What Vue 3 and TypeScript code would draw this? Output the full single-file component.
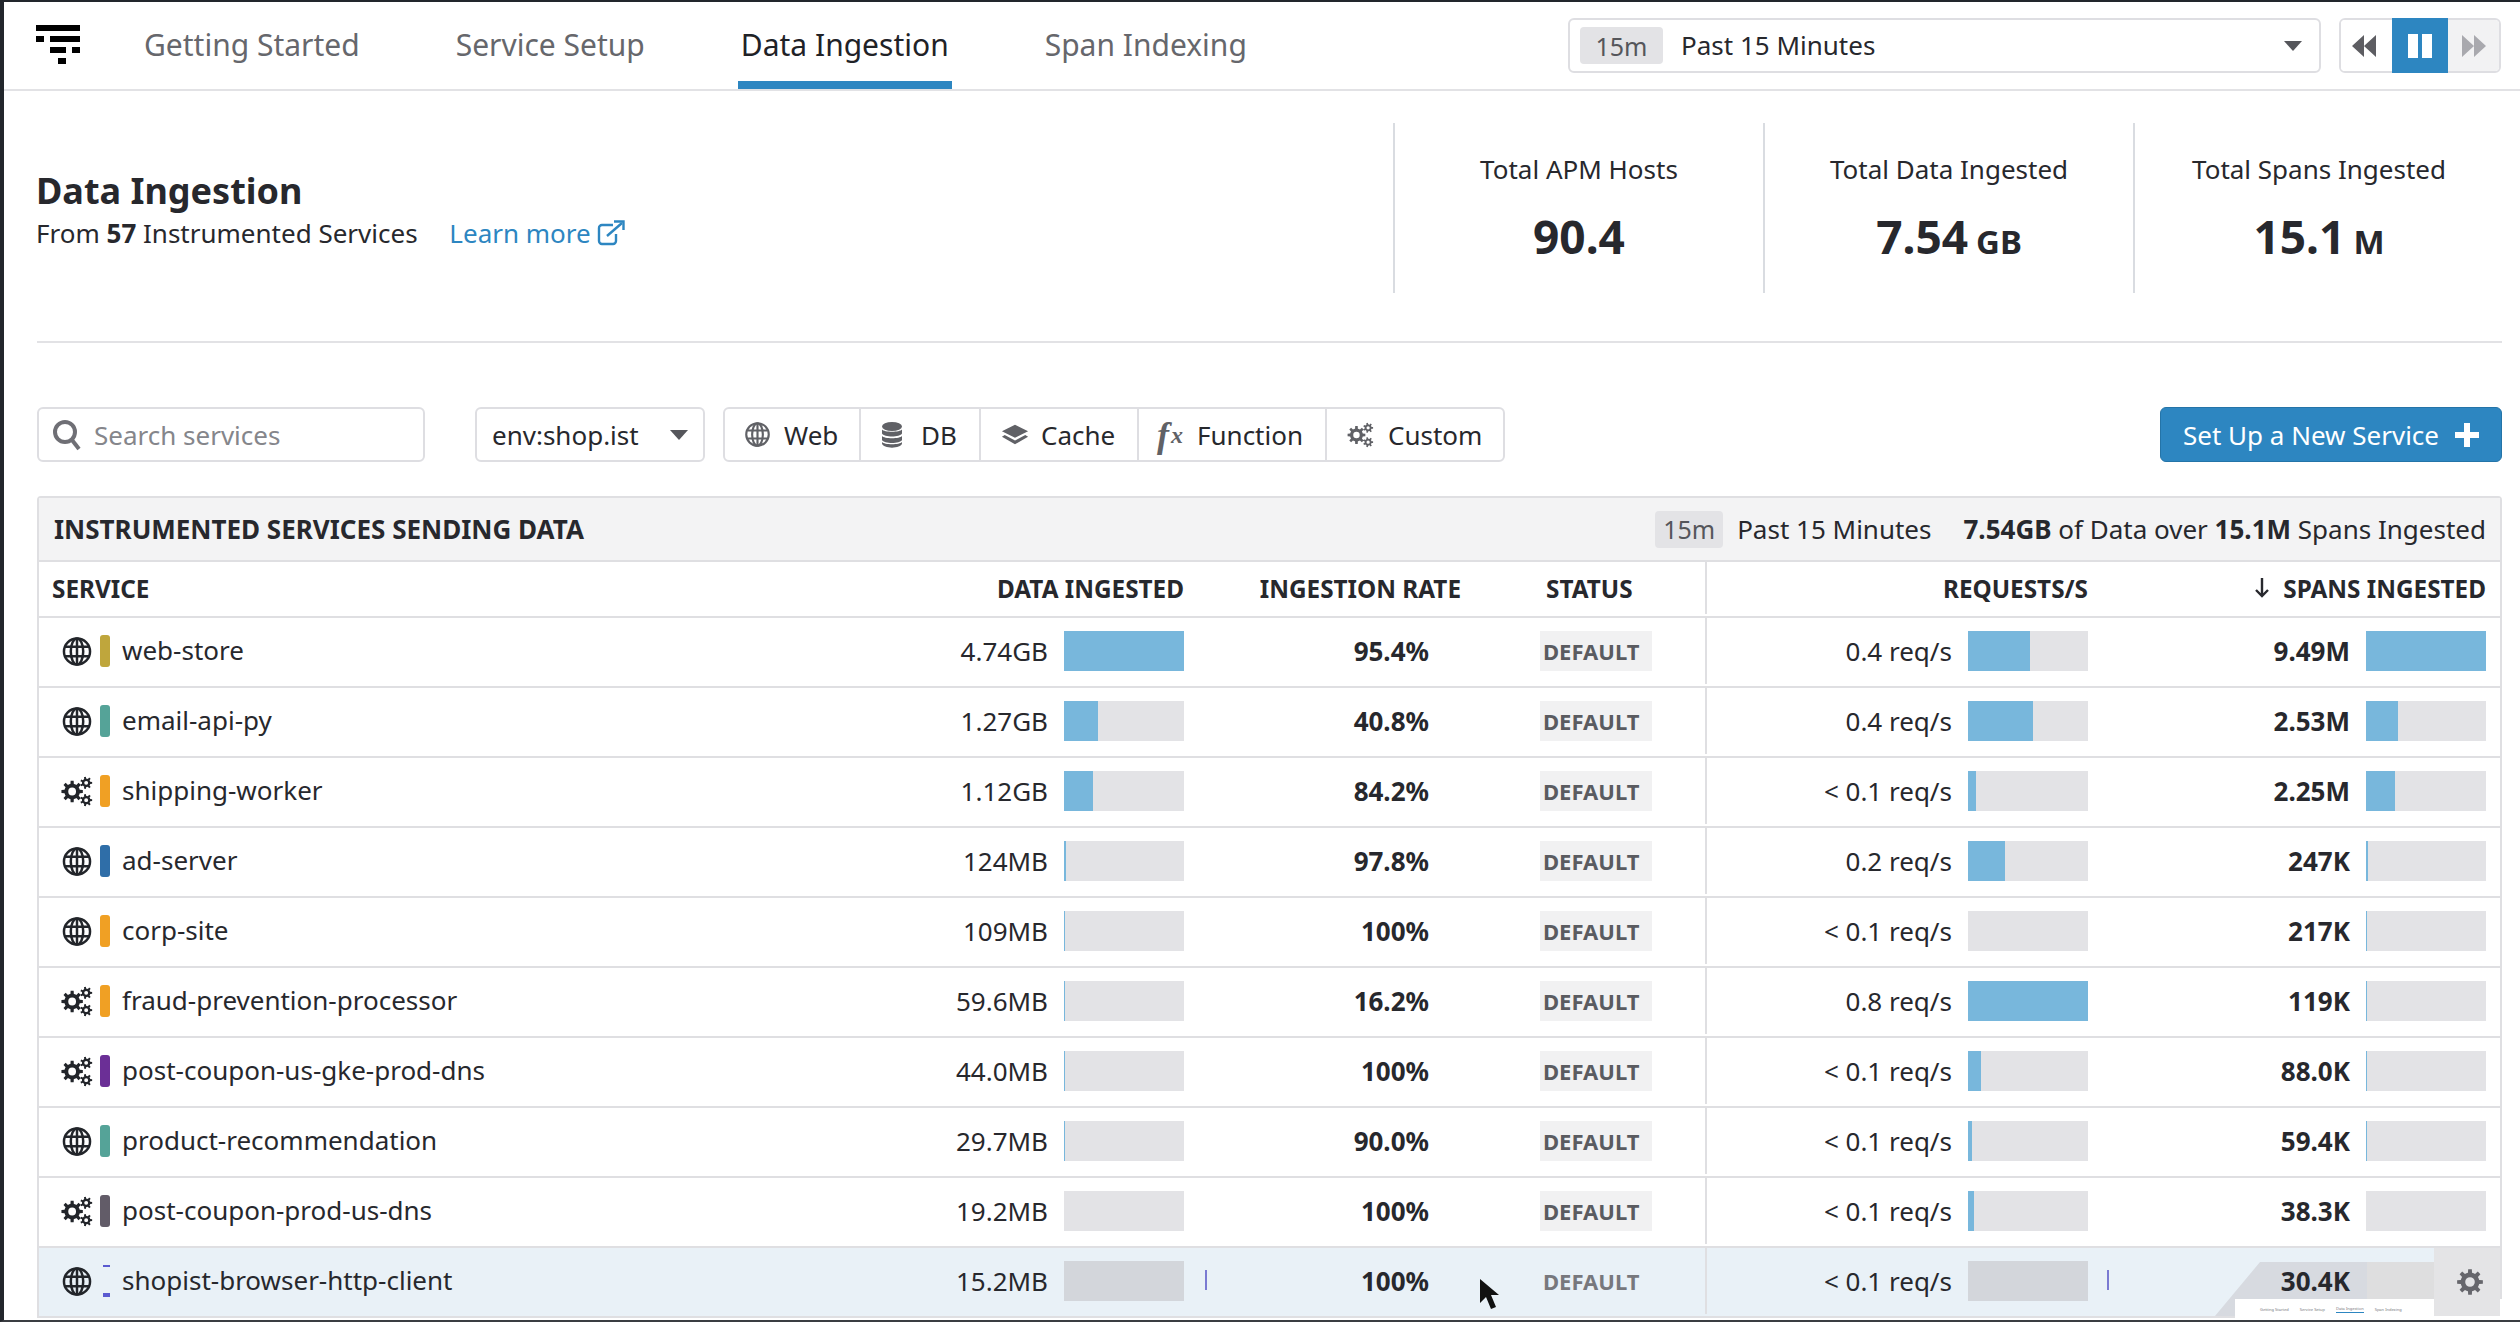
<script setup lang="ts">
interface Service {
  name: string;
  kind: "web" | "custom";
  color: string;
  data: string;
  dataPct: number;
  rate: string;
  req: string;
  reqPct: number;
  spans: string;
  spansPct: number;
}

const tabs = ["Getting Started", "Service Setup", "Data Ingestion", "Span Indexing"];

const stats = [
  { label: "Total APM Hosts", value: "90.4", unit: "" },
  { label: "Total Data Ingested", value: "7.54", unit: "GB" },
  { label: "Total Spans Ingested", value: "15.1", unit: "M" },
];

const services: Service[] = [
  { name: "web-store", kind: "web", color: "#bfa63c", data: "4.74GB", dataPct: 100, rate: "95.4%", req: "0.4 req/s", reqPct: 52, spans: "9.49M", spansPct: 100 },
  { name: "email-api-py", kind: "web", color: "#55a398", data: "1.27GB", dataPct: 28, rate: "40.8%", req: "0.4 req/s", reqPct: 54, spans: "2.53M", spansPct: 27 },
  { name: "shipping-worker", kind: "custom", color: "#f0a024", data: "1.12GB", dataPct: 24, rate: "84.2%", req: "< 0.1 req/s", reqPct: 7, spans: "2.25M", spansPct: 24 },
  { name: "ad-server", kind: "web", color: "#2f6ea8", data: "124MB", dataPct: 2, rate: "97.8%", req: "0.2 req/s", reqPct: 31, spans: "247K", spansPct: 2 },
  { name: "corp-site", kind: "web", color: "#f0a024", data: "109MB", dataPct: 1, rate: "100%", req: "< 0.1 req/s", reqPct: 0, spans: "217K", spansPct: 1 },
  { name: "fraud-prevention-processor", kind: "custom", color: "#f0a024", data: "59.6MB", dataPct: 1, rate: "16.2%", req: "0.8 req/s", reqPct: 100, spans: "119K", spansPct: 1 },
  { name: "post-coupon-us-gke-prod-dns", kind: "custom", color: "#6b2f96", data: "44.0MB", dataPct: 1, rate: "100%", req: "< 0.1 req/s", reqPct: 11, spans: "88.0K", spansPct: 1 },
  { name: "product-recommendation", kind: "web", color: "#55a398", data: "29.7MB", dataPct: 1, rate: "90.0%", req: "< 0.1 req/s", reqPct: 3, spans: "59.4K", spansPct: 1 },
  { name: "post-coupon-prod-us-dns", kind: "custom", color: "#625c68", data: "19.2MB", dataPct: 0, rate: "100%", req: "< 0.1 req/s", reqPct: 5, spans: "38.3K", spansPct: 0 },
  { name: "shopist-browser-http-client", kind: "web", color: "transparent", data: "15.2MB", dataPct: 0, rate: "100%", req: "< 0.1 req/s", reqPct: 0, spans: "30.4K", spansPct: 0 },
];

function gear(cx: number, cy: number, outer: number, inner: number, hole: number, teeth: number) {
  let d = "";
  const step = (Math.PI * 2) / teeth;
  for (let i = 0; i < teeth; i++) {
    const a = i * step;
    const pts: [number, number][] = [
      [inner, a - step * 0.5],
      [inner, a - step * 0.28],
      [outer, a - step * 0.18],
      [outer, a + step * 0.18],
      [inner, a + step * 0.28],
    ];
    for (const [r, t] of pts) {
      d += (d ? "L" : "M") + (cx + r * Math.cos(t)).toFixed(2) + " " + (cy + r * Math.sin(t)).toFixed(2);
    }
  }
  d += "Z";
  d += `M${cx - hole} ${cy}a${hole} ${hole} 0 1 0 ${hole * 2} 0a${hole} ${hole} 0 1 0 ${-hole * 2} 0Z`;
  return d;
}

const gearsPath = gear(10.5, 14.5, 10, 7.2, 3.6, 8) + gear(23.5, 6.5, 5.6, 3.9, 1.8, 7) + gear(23.5, 22.5, 5.6, 3.9, 1.8, 7);
const singleGear = gear(14, 14, 13, 9.4, 4.8, 8);
</script>

<template>
  <div class="page">
    <svg class="defs" width="0" height="0">
      <symbol id="globe" viewBox="0 0 28 28">
        <g fill="none" stroke="currentColor" stroke-width="2.4">
          <circle cx="14" cy="14" r="12.6" />
          <ellipse cx="14" cy="14" rx="6" ry="12.6" />
          <path d="M14 1.4v25.2M2.4 9.5h23.2M2.4 18.5h23.2" />
        </g>
      </symbol>
      <symbol id="gears" viewBox="0 0 30 29">
        <path :d="gearsPath" fill="currentColor" fill-rule="evenodd" />
      </symbol>
    </svg>

    <nav class="topnav">
      <div class="logo">
        <span class="l1"></span>
        <span class="l2"><i class="a"></i><i class="b"></i></span>
        <span class="l3"><i class="a"></i><i class="b"></i></span>
        <span class="l4"></span>
      </div>
      <a v-for="(tab, i) in tabs" :key="tab" class="tab" :class="{ active: i === 2 }">{{ tab }}</a>
      <div class="timepicker">
        <span class="chip">15m</span>
        <span class="timetext">Past 15 Minutes</span>
        <span class="caret small"></span>
      </div>
      <div class="playback">
        <button class="pb back">
          <svg width="26" height="22" viewBox="0 0 26 22"><path d="M13 0v22L1 11zM25 0v22L13 11z" fill="#5d5d62" /></svg>
        </button>
        <button class="pb pause">
          <svg width="26" height="24" viewBox="0 0 26 24"><path d="M1 0h10v24H1zM15 0h10v24H15z" fill="#fff" /></svg>
        </button>
        <button class="pb next">
          <svg width="26" height="22" viewBox="0 0 26 22"><path d="M1 0v22l12-11zM13 0v22l12-11z" fill="#a9a9ae" /></svg>
        </button>
      </div>
    </nav>

    <section class="summary">
      <div class="intro">
        <h1>Data Ingestion</h1>
        <p>
          From <b>57</b> Instrumented Services
          <a class="learn">Learn more
            <svg width="28" height="26" viewBox="0 0 28 26" fill="none" stroke="currentColor" stroke-width="2.4">
              <path d="M16 5H5a3 3 0 0 0-3 3v13a3 3 0 0 0 3 3h11a3 3 0 0 0 3-3v-7" />
              <path d="M10 16 25 3" />
              <path d="M17 1.5h9.5V10" />
            </svg>
          </a>
        </p>
      </div>
      <div v-for="s in stats" :key="s.label" class="stat">
        <div class="stat-label">{{ s.label }}</div>
        <div class="stat-value">{{ s.value }}<small v-if="s.unit">{{ s.unit }}</small></div>
      </div>
    </section>

    <div class="rule"></div>

    <div class="toolbar">
      <div class="search">
        <svg width="30" height="32" viewBox="0 0 30 32" fill="none" stroke="#6f6f75" stroke-width="4">
          <circle cx="13" cy="13" r="10" />
          <path d="m20 21 7 9" />
        </svg>
        <span>Search services</span>
      </div>
      <div class="env">
        <span>env:shop.ist</span>
        <span class="caret"></span>
      </div>
      <div class="filters">
        <div class="filter w1">
          <svg class="ficon" width="25" height="25"><use href="#globe" /></svg>Web
        </div>
        <div class="filter w2">
          <svg class="ficon" width="22" height="26" viewBox="0 0 22 26" fill="currentColor">
            <ellipse cx="11" cy="4.500" rx="10" ry="4.500" />
            <path d="M1 7.500c2 3 18 3 20 0v4c-2 4-18 4-20 0zM1 14c2 3 18 3 20 0v4c-2 4-18 4-20 0zM1 20c2 3 18 3 20 0v1.500c-1 5.500-19 5.500-20 0z" />
          </svg>DB
        </div>
        <div class="filter w3">
          <svg class="ficon" width="28" height="24" viewBox="0 0 30 24" fill="currentColor">
            <path d="M15 1 29 8 15 15 1 8z" />
            <path d="m4 12-3 2 14 8 14-8-3-2-11 6z" />
          </svg>Cache
        </div>
        <div class="filter w4">
          <i class="fx">f<span>x</span></i>Function
        </div>
        <div class="filter w5">
          <svg class="ficon" width="27" height="26"><use href="#gears" /></svg>Custom
        </div>
      </div>
      <button class="primary">
        Set Up a New Service
        <svg width="24" height="24" viewBox="0 0 24 24"><path d="M9 0h6v9h9v6h-9v9H9v-9H0V9h9z" fill="#fff" /></svg>
      </button>
    </div>

    <div class="table">
      <div class="band">
        <span class="band-title">INSTRUMENTED SERVICES SENDING DATA</span>
        <span class="chip band-chip">15m</span>
        <span class="band-time">Past 15 Minutes</span>
        <span class="band-sum"><b>7.54GB</b> of Data over <b>15.1M</b> Spans Ingested</span>
      </div>

      <div class="grid head">
        <div class="c-service">SERVICE</div>
        <div class="c-data">DATA INGESTED</div>
        <div class="c-rate">INGESTION RATE</div>
        <div class="c-status">STATUS</div>
        <div class="c-req">REQUESTS/S</div>
        <div class="c-spans">
          <svg class="arrow" width="14" height="20" viewBox="0 0 14 20" fill="none" stroke="#27282d" stroke-width="2.4">
            <path d="M7 0v18M1 12l6 6 6-6" />
          </svg>SPANS INGESTED
        </div>
      </div>

      <div v-for="(s, i) in services" :key="s.name" class="grid row" :class="{ hovered: i === services.length - 1 }">
        <div class="c-service">
          <svg class="kind" :class="s.kind" width="30" height="29"><use :href="s.kind === 'web' ? '#globe' : '#gears'" /></svg>
          <span class="swatch" :style="{ background: s.color }">
            <template v-if="i === services.length - 1"><i class="speck top"></i><i class="speck bottom"></i></template>
          </span>
          <span class="name">{{ s.name }}</span>
        </div>
        <div class="c-data">
          <span class="val">{{ s.data }}</span>
          <span class="bar"><span class="fill" :style="{ width: s.dataPct + '%' }"></span></span>
        </div>
        <div class="c-rate"><b>{{ s.rate }}</b></div>
        <div class="c-status"><span class="tag">DEFAULT</span></div>
        <div class="c-req">
          <span class="val">{{ s.req }}</span>
          <span class="bar"><span class="fill" :style="{ width: s.reqPct + '%' }"></span></span>
        </div>
        <div class="c-spans">
          <b class="val">{{ s.spans }}</b>
          <span class="bar"><span class="fill" :style="{ width: s.spansPct + '%' }"></span></span>
        </div>
        <template v-if="i === services.length - 1">
          <i class="tick t1"></i>
          <i class="tick t2"></i>
          <div class="smear"></div>
          <div class="actions">
            <svg width="28" height="28" viewBox="0 0 28 28"><path :d="singleGear" fill="#66666c" fill-rule="evenodd" /></svg>
          </div>
        </template>
      </div>
    </div>

    <svg class="cursor" width="22" height="34" viewBox="0 0 22 34">
      <path d="M2 1v24l6-6 5 12 5-2-5-12h8z" fill="#111" />
    </svg>

    <div class="thumb">
      <span>Getting Started</span><span>Service Setup</span><span class="on">Data Ingestion</span><span>Span Indexing</span><span class="t5">Past 15 Minutes</span>
    </div>
  </div>
</template>

<style>
html,
body {
  margin: 0;
  background: #fff;
  overflow: hidden;
}
</style>

<style scoped>
.page {
  position: relative;
  box-sizing: border-box;
  width: 2520px;
  height: 1322px;
  overflow: hidden;
  border-top: 2px solid #22262c;
  border-bottom: 2px solid #3a3d42;
  border-left: 4px solid #22262c;
  background: #fff;
  font-family: "Noto Sans", sans-serif;
  color: #27282d;
}
.defs {
  position: absolute;
}

/* top nav */
.topnav {
  display: flex;
  align-items: center;
  box-sizing: border-box;
  height: 89px;
  padding: 0 19px 0 32px;
  border-bottom: 2px solid #e2e2e5;
}
.logo {
  display: flex;
  flex-direction: column;
  gap: 5px;
  width: 44px;
  margin-right: 61px;
  margin-bottom: 2px;
}
.logo span {
  display: flex;
  height: 6px;
}
.logo i {
  display: block;
  height: 6px;
  background: #000;
}
.l1 {
  background: #000;
}
.l2 .a {
  width: 8px;
  margin-right: 6px;
}
.l2 .b {
  width: 30px;
}
.l3 {
  padding-left: 14px;
}
.l3 .a {
  width: 16px;
  margin-right: 6px;
}
.l3 .b {
  width: 8px;
}
.l4 {
  width: 8px;
  margin-left: 22px;
  background: #000;
}
.tab {
  display: flex;
  align-items: center;
  box-sizing: border-box;
  height: 87px;
  padding: 6px 3px 0;
  margin-right: 90px;
  border-bottom: 8px solid transparent;
  font-size: 30px;
  color: #66676c;
}
.tab.active {
  color: #1f2227;
  border-bottom-color: #2d86c1;
}
.timepicker {
  display: flex;
  align-items: center;
  box-sizing: border-box;
  width: 753px;
  height: 55px;
  margin-left: auto;
  padding: 0 17px 0 10px;
  border: 2px solid #dedee2;
  border-radius: 6px;
}
.chip {
  display: inline-flex;
  align-items: center;
  justify-content: center;
  box-sizing: border-box;
  width: 83px;
  height: 37px;
  border-radius: 4px;
  background: #e3e3e6;
  font-size: 25px;
  color: #55565b;
}
.timetext {
  position: relative;
  top: -1px;
  margin-left: 18px;
  font-size: 26px;
}
.caret {
  width: 0;
  height: 0;
  margin-left: auto;
  border-left: 9px solid transparent;
  border-right: 9px solid transparent;
  border-top: 10px solid #55565b;
}
.playback {
  display: flex;
  box-sizing: border-box;
  width: 162px;
  height: 55px;
  margin-left: 18px;
  border: 2px solid #dedee2;
  border-radius: 6px;
}
.pb {
  display: flex;
  align-items: center;
  justify-content: center;
  padding: 0;
  border: 0;
  background: #fff;
}
.back {
  width: 51px;
  padding-right: 5px;
  border-radius: 4px 0 0 4px;
}
.pause {
  width: 56px;
  margin: -2px 0;
  background: #2d86c1;
}
.next {
  flex: 1;
  background: #f2f2f3;
  border-radius: 0 4px 4px 0;
}

/* summary */
.summary {
  display: flex;
  align-items: stretch;
  box-sizing: border-box;
  height: 250px;
  padding: 32px 17px 0 32px;
}
.intro {
  flex: 1;
  padding-top: 44px;
}
h1 {
  margin: 0;
  font-size: 36px;
  line-height: 48px;
  font-weight: 700;
}
.intro p {
  margin: 0;
  font-size: 26px;
  line-height: 36px;
}
.learn {
  margin-left: 25px;
  color: #2d86c1;
}
.learn svg {
  vertical-align: -3px;
}
.stat {
  box-sizing: border-box;
  width: 370px;
  height: 170px;
  padding-top: 28px;
  border-left: 2px solid #d9dce1;
  text-align: center;
}
.stat-label {
  font-size: 26px;
  line-height: 36px;
}
.stat-value {
  margin-top: 18px;
  font-size: 46px;
  line-height: 62px;
  font-weight: 700;
}
.stat-value small {
  margin-left: 8px;
  font-size: 33px;
}
.rule {
  height: 2px;
  margin: 0 18px 0 33px;
  background: #e2e2e5;
}

/* toolbar */
.toolbar {
  display: flex;
  align-items: stretch;
  height: 55px;
  margin: 64px 18px 0 33px;
  font-size: 26px;
}
.search {
  display: flex;
  align-items: center;
  gap: 12px;
  box-sizing: border-box;
  width: 388px;
  padding-left: 13px;
  border: 2px solid #dedee2;
  border-radius: 6px;
  color: #85868b;
}
.env {
  display: flex;
  align-items: center;
  box-sizing: border-box;
  width: 230px;
  margin-left: 50px;
  padding: 0 15px 0 15px;
  border: 2px solid #dedee2;
  border-radius: 6px;
}
.filters {
  display: flex;
  box-sizing: border-box;
  margin-left: 18px;
  border: 2px solid #dedee2;
  border-radius: 6px;
}
.filter {
  display: flex;
  align-items: center;
  box-sizing: border-box;
  gap: 14px;
  padding-left: 20px;
  border-left: 2px solid #dedee2;
}
.filter:first-child {
  border-left: 0;
}
.ficon,
.fx {
  color: #606166;
}
.w1 {
  width: 134px;
}
.w2 {
  width: 120px;
  gap: 18px;
}
.w3 {
  width: 158px;
  gap: 12px;
  padding-left: 20px;
}
.w4 {
  width: 188px;
  gap: 14px;
  padding-left: 18px;
}
.w5 {
  width: 178px;
}
.fx {
  display: flex;
  align-items: center;
  font-family: "Liberation Serif", serif;
  font-size: 36px;
  font-weight: 700;
  line-height: 1;
}
.fx span {
  margin-left: 2px;
  font-size: 24px;
}
.primary {
  display: flex;
  align-items: center;
  justify-content: center;
  gap: 16px;
  box-sizing: border-box;
  width: 342px;
  margin-left: auto;
  padding: 0;
  border: 1px solid #2474a8;
  border-radius: 6px;
  background: #2d86c1;
  color: #fff;
  font-family: inherit;
  font-size: 26px;
}

/* table */
.table {
  box-sizing: border-box;
  margin: 34px 18px 0 33px;
  border: 2px solid #dfdfe2;
  border-radius: 4px 4px 0 0;
}
.band {
  display: flex;
  align-items: center;
  height: 62px;
  padding: 0 14px 0 15px;
  background: #f3f3f4;
  font-size: 26px;
}
.band-title {
  margin-right: auto;
  font-size: 26px;
  font-weight: 700;
}
.band-chip {
  width: 68px;
  background: #e3e3e6;
}
.band-time {
  margin-left: 14px;
}
.band-sum {
  margin-left: 32px;
}
.grid {
  position: relative;
  display: grid;
  grid-template-columns: 960px 202px 260px 246px 398px 395px;
  grid-template-rows: 100%;
  box-sizing: border-box;
  border-top: 2px solid #dfdfe2;
}
.grid > div {
  display: flex;
  align-items: center;
  justify-content: flex-end;
  white-space: nowrap;
}
.head {
  height: 56px;
  padding-bottom: 2px;
  font-size: 24.3px;
  font-weight: 700;
}
.head .c-service {
  justify-content: flex-start;
  padding-left: 13px;
}
.head .c-data,
.head .c-req {
  padding-right: 17px;
}
.head .c-status {
  justify-content: flex-start;
  padding-left: 85px;
}
.head .c-spans {
  padding-right: 14px;
}
.arrow {
  flex: none;
  margin-right: 14px;
}
.row {
  height: 70px;
  padding-bottom: 2px;
  font-size: 26px;
}
.row .c-service {
  justify-content: flex-start;
  padding-left: 23px;
}
.kind {
  flex: none;
  color: #22252a;
}
.kind.custom {
  transform: scale(1.08);
}
.swatch {
  position: relative;
  flex: none;
  width: 10px;
  height: 32px;
  margin-left: 8px;
  border-radius: 3px;
}
.speck {
  position: absolute;
  left: 3px;
  width: 7px;
  height: 2px;
  background: #5a5ad0;
}
.speck.top {
  top: 0;
}
.speck.bottom {
  bottom: 0;
  height: 4px;
}
.name {
  margin-left: 12px;
  position: relative;
  top: -1px;
}
.row .c-data,
.row .c-req {
  padding-right: 17px;
}
.row .c-spans {
  padding-right: 14px;
}
.val {
  margin-right: 16px;
  white-space: nowrap;
}
.bar {
  display: block;
  flex: none;
  width: 120px;
  height: 40px;
  background: #e3e3e6;
}
.fill {
  display: block;
  height: 100%;
  background: #78b7dc;
}
.c-rate {
  padding-right: 32px;
}
.head .c-rate {
  padding-right: 0;
}
.row .c-status {
  justify-content: flex-start;
  padding-left: 79px;
  border-right: 2px solid #dfdfe2;
}
.head .c-status {
  border-right: 2px solid #dfdfe2;
}
.tag {
  display: flex;
  align-items: center;
  box-sizing: border-box;
  width: 112px;
  height: 40px;
  padding-left: 3px;
  background: #f1f1f2;
  font-size: 22px;
  font-weight: 700;
  color: #5a5b60;
}
.hovered {
  background: #e9f1f7;
}
.hovered .bar {
  background: #d3d6db;
}
.hovered .c-spans .bar {
  background: transparent;
}
.hovered .tag {
  background: transparent;
  color: #77787d;
}
.hovered > div:not(.smear):not(.actions) {
  position: relative;
  z-index: 1;
}
.tick {
  position: absolute;
  top: 22px;
  width: 2px;
  height: 20px;
  background: #7a7ad2;
}
.t1 {
  left: 1166px;
}
.t2 {
  left: 2068px;
}
.smear {
  position: absolute;
  left: 2176px;
  right: 0;
  top: 14px;
  height: 54px;
  background: linear-gradient(90deg, #d7dae0 152px, #dededf 152px);
  clip-path: polygon(45px 0, 100% 0, 100% 100%, 0 100%);
}
.actions {
  position: absolute;
  right: 0;
  top: 0;
  width: 66px;
  height: 68px;
  padding-left: 6px;
  box-sizing: border-box;
  justify-content: center !important;
  z-index: 2;
  background: #e4e4e6;
}
.cursor {
  position: absolute;
  left: 1474px;
  top: 1276px;
}
.thumb {
  position: absolute;
  left: 2231px;
  top: 1297px;
  right: 0;
  display: flex;
  align-items: center;
  gap: 11px;
  height: 21px;
  padding-left: 25px;
  background: #fff;
  font-size: 4px;
  color: #77787d;
  white-space: nowrap;
}
.thumb .on {
  padding-bottom: 1px;
  border-bottom: 1px solid #2d86c1;
}
.thumb .t5 {
  margin-left: 24px;
}
</style>
